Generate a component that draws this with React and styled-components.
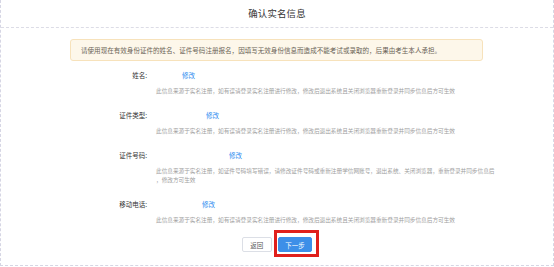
import styled, { createGlobalStyle } from "styled-components"

const GlobalStyle = createGlobalStyle`
    body {
        margin: 0;
        background: #ffffff;
        font-family: "Noto Sans CJK SC", "Liberation Sans", sans-serif;
    }
`

const campos = [
    { label: "姓名:", largura: 26, texto: ["此信息来源于实名注册，如有误请登录实名注册进行修改，修改后退出系统且关闭浏览器重新登录并同步信息后方可生效"] },
    { label: "证件类型:", largura: 50, texto: ["此信息来源于实名注册，如有误请登录实名注册进行修改，修改后退出系统且关闭浏览器重新登录并同步信息后方可生效"] },
    { label: "证件号码:", largura: 73, texto: ["此信息来源于实名注册，如证件号码填写错误，请修改证件号码或重新注册学信网账号，退出系统、关闭浏览器，重新登录并同步信息后", "，修改方可生效"] },
    { label: "移动电话:", largura: 46, texto: ["此信息来源于实名注册，如有误请登录实名注册进行修改，修改后退出系统且关闭浏览器重新登录并同步信息后方可生效"] },
]

export default function App() {
    return (
        <>
            <GlobalStyle />
            <Pagina>
                <Cabecalho>确认实名信息</Cabecalho>
                <Aviso>请使用现在有效身份证件的姓名、证件号码注册报名，因填写无效身份信息而造成不能考试或录取的，后果由考生本人承担。</Aviso>
                <Formulario>
                    {campos.map((c) => (
                        <Campo key={c.label}>
                            <Rotulo>{c.label}</Rotulo>
                            <Conteudo>
                                <Linha>
                                    <Valor $w={c.largura} />
                                    <Link href="#">修改</Link>
                                </Linha>
                                <Descricao>
                                    {c.texto.map((t, i) => <LinhaTexto key={i}>{t}</LinhaTexto>)}
                                </Descricao>
                            </Conteudo>
                        </Campo>
                    ))}
                </Formulario>
                <Botoes>
                    <Botao type="button">返回</Botao>
                    <Botao type="button" $primario>下一步</Botao>
                </Botoes>
            </Pagina>
        </>
    )
}

const Pagina = styled.div`
    box-sizing: border-box;
    width: 554px;
    height: 266px;
    border: 1px dashed #d6d6e4;
    border-top: none;
    display: flex;
    flex-direction: column;
`

const Cabecalho = styled.div`
    height: 27px;
    line-height: 27px;
    text-align: center;
    font-size: 9.4px;
    color: #333333;
    border-bottom: 1px dashed #dcdce6;
    letter-spacing: 0.2px;
`

const Aviso = styled.div`
    box-sizing: border-box;
    margin: 11px 70px 0 69px;
    height: 22px;
    line-height: 20px;
    padding-left: 10px;
    font-size: 6.55px;
    color: #6b6457;
    background: #fdf7ea;
    border: 1px solid #f7e2bb;
    border-radius: 3px;
`

const Formulario = styled.div`
    display: flex;
    flex-direction: column;
    gap: 15px;
    padding: 9px 0 0 70px;
`

const Campo = styled.div`
    display: flex;
`

const Rotulo = styled.div`
    width: 76px;
    flex-shrink: 0;
    text-align: right;
    font-size: 6.5px;
    line-height: 10px;
    color: #333333;
`

const Conteudo = styled.div`
    margin-left: 9px;
    display: flex;
    flex-direction: column;
    gap: 6px;
`

const Linha = styled.div`
    display: flex;
    align-items: center;
    height: 10px;
`

const Valor = styled.span`
    width: ${(p) => p.$w}px;
`

const Link = styled.a`
    font-size: 6.5px;
    color: #2d8cf0;
    text-decoration: none;
`

const Descricao = styled.div`
    display: flex;
    flex-direction: column;
    font-size: 5.65px;
    line-height: 9px;
    color: #a0a0a0;
`

const LinhaTexto = styled.span`
    white-space: nowrap;
`

const Botoes = styled.div`
    display: flex;
    justify-content: center;
    gap: 6px;
    margin-top: 13px;
`

const Botao = styled.button`
    position: relative;
    box-sizing: border-box;
    height: 15px;
    padding: 0 ${(p) => (p.$primario ? "6.5px" : "7.5px")};
    font-family: inherit;
    font-size: 6.5px;
    border-radius: 2px;
    cursor: pointer;
    color: ${(p) => (p.$primario ? "#ffffff" : "#555555")};
    background: ${(p) => (p.$primario ? "#3d8fe8" : "#ffffff")};
    border: 1px solid ${(p) => (p.$primario ? "#3d8fe8" : "#dcdfe6")};

    &::after {
        content: "";
        display: ${(p) => (p.$primario ? "block" : "none")};
        position: absolute;
        left: -5px;
        right: -8px;
        top: -8px;
        bottom: -6px;
        border: 3px solid #e0201c;
        pointer-events: none;
    }
`
